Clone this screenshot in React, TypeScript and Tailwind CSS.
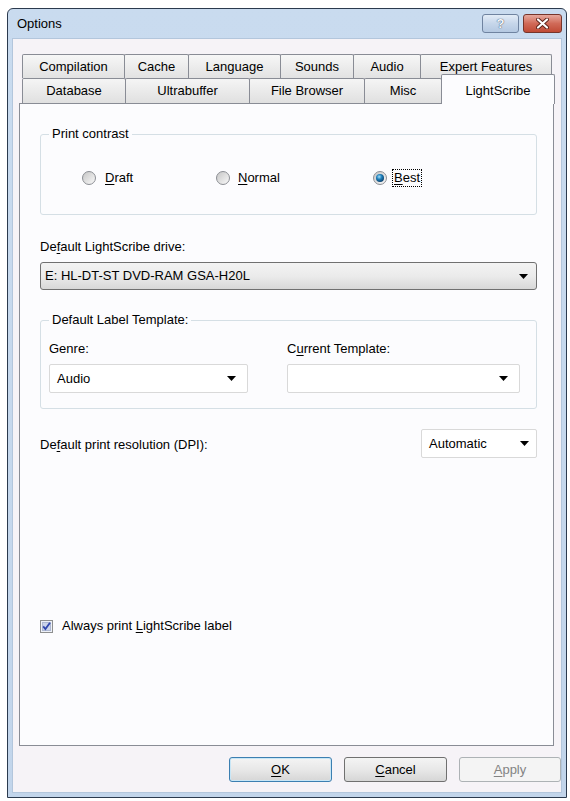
import type { ReactNode } from "react"

const BACK_ROW = [
  { label: "Compilation", w: "w-[103px]" },
  { label: "Cache", w: "w-[65px]" },
  { label: "Language", w: "w-[93px]" },
  { label: "Sounds", w: "w-[74px]" },
  { label: "Audio", w: "w-[68px]" },
  { label: "Expert Features", w: "w-[132px]" },
]

const FRONT_ROW = [
  { label: "Database", w: "w-[104px]" },
  { label: "Ultrabuffer", w: "w-[125px]" },
  { label: "File Browser", w: "w-[116px]" },
  { label: "Misc", w: "w-[78px]" },
]

// underlined access key
function Key({ children }: { children: ReactNode }) {
  return <span className="underline decoration-1 underline-offset-[2px]">{children}</span>
}

function Arrow() {
  return (
    <svg width="9" height="5" viewBox="0 0 9 5" className="shrink-0">
      <path d="M0 0h9L4.5 5z" fill="#000" />
    </svg>
  )
}

function Radio({ checked }: { checked?: boolean }) {
  return (
    <svg width="14" height="14" viewBox="0 0 14 14" className="shrink-0">
      <defs>
        <linearGradient id="radioRing" x1="0" y1="0" x2="1" y2="1">
          <stop offset="0" stopColor="#c4c4c4" />
          <stop offset="1" stopColor="#fbfbfb" />
        </linearGradient>
        <radialGradient id="radioDot" cx="0.4" cy="0.35" r="0.7">
          <stop offset="0" stopColor="#a6e0fb" />
          <stop offset="0.45" stopColor="#1f80bb" />
          <stop offset="1" stopColor="#0b3b66" />
        </radialGradient>
      </defs>
      <circle cx="7" cy="7" r="6.5" fill="url(#radioRing)" stroke="#8c8f94" />
      {checked && <circle cx="7" cy="7" r="4" fill="url(#radioDot)" />}
    </svg>
  )
}

function Checkbox() {
  return (
    <svg width="13" height="13" viewBox="0 0 13 13" className="shrink-0">
      <rect x="0.5" y="0.5" width="12" height="12" fill="#eef1f8" stroke="#8e8f8f" />
      <rect x="2.5" y="2.5" width="8" height="8" fill="#cbd4ea" stroke="#aeb8d2" />
      <path d="M3.2 6.4l2.2 2.6L10 2.8" stroke="#3147ad" strokeWidth="1.8" fill="none" />
    </svg>
  )
}

function Combo({ value, flat, className }: { value?: string; flat?: boolean; className: string }) {
  return (
    <div
      className={
        flat
          ? `flex items-center justify-between rounded-[2px] border border-[#d9d9d9] bg-white pl-[7px] pr-[11px] ${className}`
          : `flex items-center justify-between rounded-[3px] border border-[#707070] bg-gradient-to-b from-[#f3f3f3] via-[#ebebeb] to-[#d8d8d8] pl-[4px] pr-[8px] ${className}`
      }
    >
      <span>{value}</span>
      <Arrow />
    </div>
  )
}

function Group({ title, children, className }: { title: string; children: ReactNode; className: string }) {
  return (
    <fieldset className={`rounded-[3px] border border-[#d5dfe5] ${className}`}>
      <legend className="ml-[8px] px-[3px]">{title}</legend>
      {children}
    </fieldset>
  )
}

function TitleBar() {
  return (
    <div className="flex h-[29px] items-center pl-[5px]">
      <span className="text-[13px] text-black">Options</span>
      <div className="ml-auto flex gap-[4px]">
        <div className="flex h-[19px] w-[37px] items-center justify-center rounded-[3px] border border-[#6f83a0] bg-gradient-to-b from-[#e3ecf7] via-[#c6d6ea] to-[#b4c8e1]">
          <span className="text-[13px] font-bold leading-none text-[#f4f7fb] [text-shadow:0_0_1px_#4a5a70,0_0_1px_#4a5a70]">?</span>
        </div>
        <div className="flex h-[19px] w-[39px] items-center justify-center rounded-[3px] border border-[#76352b] bg-gradient-to-b from-[#e6a89d] via-[#d06a58] to-[#c04a35]">
          <svg width="13" height="11" viewBox="0 0 13 11">
            <path d="M2 1.5l9 8M11 1.5l-9 8" stroke="#5b2219" strokeWidth="4" strokeLinecap="round" />
            <path d="M2 1.5l9 8M11 1.5l-9 8" stroke="#ffffff" strokeWidth="2.2" strokeLinecap="round" />
          </svg>
        </div>
      </div>
    </div>
  )
}

function Tabs() {
  return (
    <div className="ml-[3px]">
      <div className="flex h-[24px]">
        {BACK_ROW.map((tab, i) => (
          <div
            key={tab.label}
            className={`flex h-[24px] items-center justify-center rounded-t-[2px] border border-b-0 border-[#898c95] bg-gradient-to-b from-[#f7f7f7] to-[#e2e2e2] ${tab.w} ${i > 0 ? "-ml-px" : ""}`}
          >
            {tab.label}
          </div>
        ))}
      </div>
      <div className="flex h-[25px] items-end">
        {FRONT_ROW.map((tab, i) => (
          <div
            key={tab.label}
            className={`flex h-[25px] items-center justify-center rounded-t-[2px] border border-b-0 border-[#898c95] bg-gradient-to-b from-[#f5f5f5] to-[#e0e0e0] ${tab.w} ${i > 0 ? "-ml-px" : ""}`}
          >
            {tab.label}
          </div>
        ))}
        <div className="relative z-10 -mb-px -ml-px flex h-[30px] w-[114px] items-start justify-center rounded-t-[2px] border border-b-0 border-[#898c95] bg-[#fcfcfe] pt-[8px]">
          LightScribe
        </div>
      </div>
    </div>
  )
}

function LightScribePane() {
  return (
    <div className="h-[643px] w-[535px] border border-[#898c95] bg-[#fcfcfe] pl-[20px] pr-[16px]">
      <Group title="Print contrast" className="mt-[22px] pb-[27px]">
        <div className="flex pl-[41px] pt-[27px]">
          <div className="flex w-[134px] items-center gap-[9px]">
            <Radio />
            <span>
              <Key>D</Key>raft
            </span>
          </div>
          <div className="flex w-[157px] items-center gap-[8px]">
            <Radio />
            <span>
              <Key>N</Key>ormal
            </span>
          </div>
          <div className="flex items-center gap-[5px]">
            <Radio checked />
            <span className="border border-dotted border-black px-px">
              <Key>B</Key>est
            </span>
          </div>
        </div>
      </Group>

      <p className="mt-[24px]">
        De<Key>f</Key>ault LightScribe drive:
      </p>
      <Combo value="E: HL-DT-ST DVD-RAM GSA-H20L" className="mt-[7px] h-[28px]" />

      <Group title="Default Label Template:" className="mt-[22px] pb-[15px]">
        <div className="grid grid-cols-[199px_233px] gap-x-[39px] gap-y-[7px] pl-[8px] pt-[13px]">
          <span>Genre:</span>
          <span>
            C<Key>u</Key>rrent Template:
          </span>
          <Combo flat value="Audio" className="h-[29px]" />
          <Combo flat className="h-[29px]" />
        </div>
      </Group>

      <div className="mt-[20px] flex items-center justify-between">
        <span className="pt-[2px]">
          De<Key>f</Key>ault print resolution (DPI):
        </span>
        <Combo flat value="Automatic" className="h-[29px] w-[116px] !pr-[7px]" />
      </div>

      <div className="mt-[160px] flex items-center gap-[9px]">
        <Checkbox />
        <span>
          Always print <Key>L</Key>ightScribe label
        </span>
      </div>
    </div>
  )
}

function Buttons() {
  return (
    <div className="mt-[11px] flex justify-end gap-[12px]">
      <button className="h-[25px] w-[103px] rounded-[3px] border border-[#3c7fb1] bg-gradient-to-b from-[#f4f4f4] via-[#e8e8e8] to-[#d6d6d6] shadow-[inset_0_0_0_1px_#c8e6f6]">
        <Key>O</Key>K
      </button>
      <button className="h-[25px] w-[103px] rounded-[3px] border border-[#707070] bg-gradient-to-b from-[#f4f4f4] via-[#e8e8e8] to-[#d6d6d6]">
        <Key>C</Key>ancel
      </button>
      <button className="h-[25px] w-[102px] rounded-[3px] border border-[#adb2b5] bg-[#f4f4f4] text-[#838383]">
        <Key>A</Key>pply
      </button>
    </div>
  )
}

export default function App() {
  return (
    <div className="h-[801px] w-[570px] bg-white pl-[7px] pt-[8px] font-['Liberation_Sans',Arial,sans-serif] text-[13px] leading-[16px] text-black">
      <div className="flex h-[790px] w-[560px] flex-col rounded-t-[6px] border border-[#2b3a4e] bg-gradient-to-b from-[#c9dbef] to-[#c2d5eb] px-[4px] pb-[4px]">
        <TitleBar />
        <div className="flex-1 border border-[#b3c6dc] bg-[#f6f3f7] pl-[6px] pt-[15px]">
          <Tabs />
          <LightScribePane />
          <Buttons />
        </div>
      </div>
    </div>
  )
}
